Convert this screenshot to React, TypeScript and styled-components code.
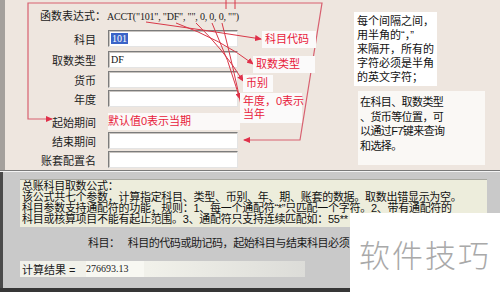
import styled, { createGlobalStyle } from "styled-components";

const GlobalStyle = createGlobalStyle`
  html, body {
    margin: 0;
    padding: 0;
  }
  body {
    width: 500px;
    height: 292px;
    overflow: hidden;
    font-family: "Liberation Sans", "Noto Sans CJK SC", sans-serif;
    color: #111;
  }
  * {
    box-sizing: border-box;
  }
`;

type Field = {
  label: string;
  value?: string;
  selected?: boolean;
  hint?: string;
  mt?: number;
};

const fields: Field[] = [
  { label: "科目", value: "101", selected: true },
  { label: "取数类型", value: "DF", mt: 2 },
  { label: "货币", mt: 1 },
  { label: "年度" },
  { label: "起始期间", hint: "默认值0表示当期", mt: 4 },
  { label: "结束期间" },
  { label: "账套配置名" },
];

const note1 = ["每个间隔之间，", "用半角的“，”", "来隔开，所有的", "字符必须是半角", "的英文字符；"];
const note2 = ["在科目、取数类型", "、货币等位置，可", "以通过F7键来查询", "和选择。"];

const helpLines = [
  "总账科目取数公式：",
  "该公式共七个参数，计算指定科目、类型、币别、年、期、账套的数据。取数出错显示为空。",
  "科目参数支持通配符的功能，规则：1、每一个通配符“*”只匹配一个字符。2、带有通配符的",
  "科目或核算项目不能有起止范围。3、通配符只支持连续匹配如：55**",
];

export default function App() {
  return (
    <>
      <GlobalStyle />
      <Page>
        <TopSection>
          <FormColumn>
            <Formula>
              函数表达式：<FormulaCode>ACCT("101", "DF", "", 0, 0, 0, "")</FormulaCode>
            </Formula>
            <Rows>
              {fields.map((f) => (
                <Row key={f.label} $mt={f.mt ?? 0}>
                  <Label>{f.label}</Label>
                  {f.hint ? (
                    <HintBox>{f.hint}</HintBox>
                  ) : (
                    <Input>
                      {f.selected ? <Selected>{f.value}</Selected> : f.value}
                    </Input>
                  )}
                </Row>
              ))}
            </Rows>
          </FormColumn>

          <NoteColumn>
            <NoteBox>
              {note1.map((l) => (
                <NoteLine key={l}>{l}</NoteLine>
              ))}
            </NoteBox>
            <NoteBoxWide>
              {note2.map((l) => (
                <NoteLineTight key={l}>{l}</NoteLineTight>
              ))}
            </NoteBoxWide>
          </NoteColumn>

          <Overlay width="500" height="170" viewBox="0 0 500 170">
            <defs>
              <marker
                id="arr"
                markerWidth="7"
                markerHeight="6"
                refX="6"
                refY="3"
                orient="auto-start-reverse"
                markerUnits="userSpaceOnUse"
              >
                <path d="M0,0 L7,3 L0,6 Z" fill="#e0304a" />
              </marker>
            </defs>
            <polyline
              points="52,119 28,119 28,3 322,3 300,140 244,140"
              fill="none"
              stroke="#d86070"
              strokeWidth="1.2"
              markerStart="url(#arr)"
              markerEnd="url(#arr)"
            />
            <g fill="none" stroke="#d83848" strokeWidth="1">
              <path d="M226,0 L226,9" />
              <path d="M235,0 L235,9" />
              <path d="M146,22 Q205,30 261,39" markerEnd="url(#arr)" />
              <path d="M176,23 Q222,40 253,64" markerEnd="url(#arr)" />
              <path d="M196,23 Q224,50 243,81" markerEnd="url(#arr)" />
              <path d="M212,23 Q229,60 240,99" markerEnd="url(#arr)" />
              <path d="M222,23 Q234,70 242,110" />
            </g>
          </Overlay>

          <Tag $x={262} $y={31} $w={54}>科目代码</Tag>
          <Tag $x={253} $y={56} $w={62}>取数类型</Tag>
          <Tag $x={243} $y={75} $w={30}>币别</Tag>
          <Tag $x={240} $y={93} $w={62}>
            年度，0表示
            <br />
            当年
          </Tag>
        </TopSection>

        <BottomSection>
          <HelpBox>
            {helpLines.map((l) => (
              <HelpLine key={l}>{l}</HelpLine>
            ))}
          </HelpBox>
          <SubjectLine>
            <SubjectKey>科目：</SubjectKey>
            科目的代码或助记码，起始科目与结束科目必须
          </SubjectLine>
          <ResultBar>
            <ResultLabel>计算结果 =</ResultLabel>
            <ResultValue>276693.13</ResultValue>
          </ResultBar>
          <Watermark>软件技巧</Watermark>
        </BottomSection>
      </Page>
    </>
  );
}

/* ─── Styled Components ─────────────────────────── */

const Page = styled.div`
  width: 500px;
  height: 292px;
  overflow: hidden;
  display: flex;
  flex-direction: column;
`;

const TopSection = styled.div`
  position: relative;
  height: 170px;
  flex-shrink: 0;
  display: flex;
  background: #eee6df;
  box-shadow: inset 5px 0 0 #a4a09c;
`;

const FormColumn = styled.div`
  width: 350px;
  padding: 9px 0 0 40px;
  display: flex;
  flex-direction: column;
`;

const Formula = styled.div`
  height: 14px;
  line-height: 14px;
  font-size: 11px;
  color: #1a1a1a;
  margin-bottom: 7px;
  white-space: nowrap;
`;

const FormulaCode = styled.span`
  font-family: "Liberation Serif", serif;
  font-size: 10px;
  letter-spacing: -0.2px;
  margin-left: 1px;
`;

const Rows = styled.div`
  display: flex;
  flex-direction: column;
  gap: 2px;
`;

const Row = styled.div<{ $mt: number }>`
  display: flex;
  align-items: center;
  gap: 12px;
  height: 17px;
  margin-top: ${({ $mt }) => $mt}px;
`;

const Label = styled.span`
  width: 56px;
  text-align: right;
  font-size: 11px;
  color: #222;
  white-space: nowrap;
`;

const Input = styled.div`
  width: 130px;
  height: 17px;
  background: #fff;
  border: 1px solid;
  border-color: #7c7c7c #e4e4e4 #e4e4e4 #7c7c7c;
  box-shadow: inset 1px 1px 0 #c8c4c0;
  padding: 1px 2px;
  font-size: 10px;
  line-height: 13px;
  color: #111;
  font-family: "Liberation Serif", serif;
`;

const Selected = styled.span`
  background: #3a64c8;
  color: #fff;
  padding: 0 1px;
`;

const HintBox = styled.div`
  width: 132px;
  height: 17px;
  background: #fbf9f8;
  padding: 1px 0;
  font-size: 11px;
  line-height: 15px;
  color: #e8203a;
  white-space: nowrap;
`;

const NoteColumn = styled.div`
  padding: 12px 0 0 4px;
  display: flex;
  flex-direction: column;
  gap: 5px;
`;

const NoteBox = styled.div`
  width: 83px;
  background: #fff;
  padding: 2px 3px;
`;

const NoteLine = styled.div`
  font-size: 11px;
  line-height: 14px;
  color: #111;
  white-space: nowrap;
`;

const NoteBoxWide = styled.div`
  width: 127px;
  margin-left: 4px;
  background: #faf8f5;
  padding: 4px 2px 12px;
`;

const NoteLineTight = styled.div`
  font-size: 11px;
  line-height: 14.5px;
  letter-spacing: -0.6px;
  color: #111;
  white-space: nowrap;
`;

const Overlay = styled.svg`
  position: absolute;
  left: 0;
  top: 0;
  pointer-events: none;
`;

const Tag = styled.div<{ $x: number; $y: number; $w: number }>`
  position: absolute;
  left: ${({ $x }) => $x}px;
  top: ${({ $y }) => $y}px;
  width: ${({ $w }) => $w}px;
  background: #fbfafa;
  padding: 2px 3px;
  font-size: 11px;
  line-height: 13px;
  color: #e8203a;
  white-space: nowrap;
`;

const BottomSection = styled.div`
  position: relative;
  flex: 1;
  background: #c9c9c9;
  border-top: 1px solid #7a7a7a;
  border-bottom: 4px solid #363636;
  box-shadow: inset 0 1px 0 #f4f4f4, inset 3px 0 0 #4a4a4a;
  padding: 8px 13px 0 20px;
  display: flex;
  flex-direction: column;
`;

const HelpBox = styled.div`
  width: 467px;
  background: #ededdc;
  border-top: 1px solid #a8a8a0;
  padding: 1px 2px 2px;
`;

const HelpLine = styled.div`
  font-size: 11px;
  line-height: 11px;
  letter-spacing: -0.28px;
  color: #111;
  white-space: nowrap;
`;

const SubjectLine = styled.div`
  margin-top: 10px;
  margin-left: 68px;
  font-size: 11px;
  line-height: 12px;
  letter-spacing: -0.45px;
  color: #1a1a1a;
  white-space: nowrap;
`;

const SubjectKey = styled.span`
  margin-right: 8px;
`;

const ResultBar = styled.div`
  margin-top: 12px;
  width: 285px;
  height: 16px;
  display: flex;
  align-items: center;
  background: linear-gradient(90deg, #f1f1ea 0%, #f1f1ea 45%, #dcdcd8 100%);
`;

const ResultLabel = styled.span`
  width: 66px;
  padding-left: 2px;
  font-size: 11px;
  color: #1a1a1a;
  white-space: nowrap;
`;

const ResultValue = styled.span`
  width: 58px;
  height: 16px;
  line-height: 16px;
  background: #f8f8f2;
  font-size: 10px;
  font-family: "Liberation Serif", serif;
  color: #222;
`;

const Watermark = styled.div`
  position: absolute;
  right: 0;
  bottom: -4px;
  width: 150px;
  height: 79px;
  background: #fff;
  display: flex;
  align-items: center;
  justify-content: center;
  padding-top: 2px;
  font-family: "Noto Sans CJK SC", sans-serif;
  font-weight: 300;
  font-size: 31px;
  letter-spacing: 2px;
  color: #a9a9a9;
`;
